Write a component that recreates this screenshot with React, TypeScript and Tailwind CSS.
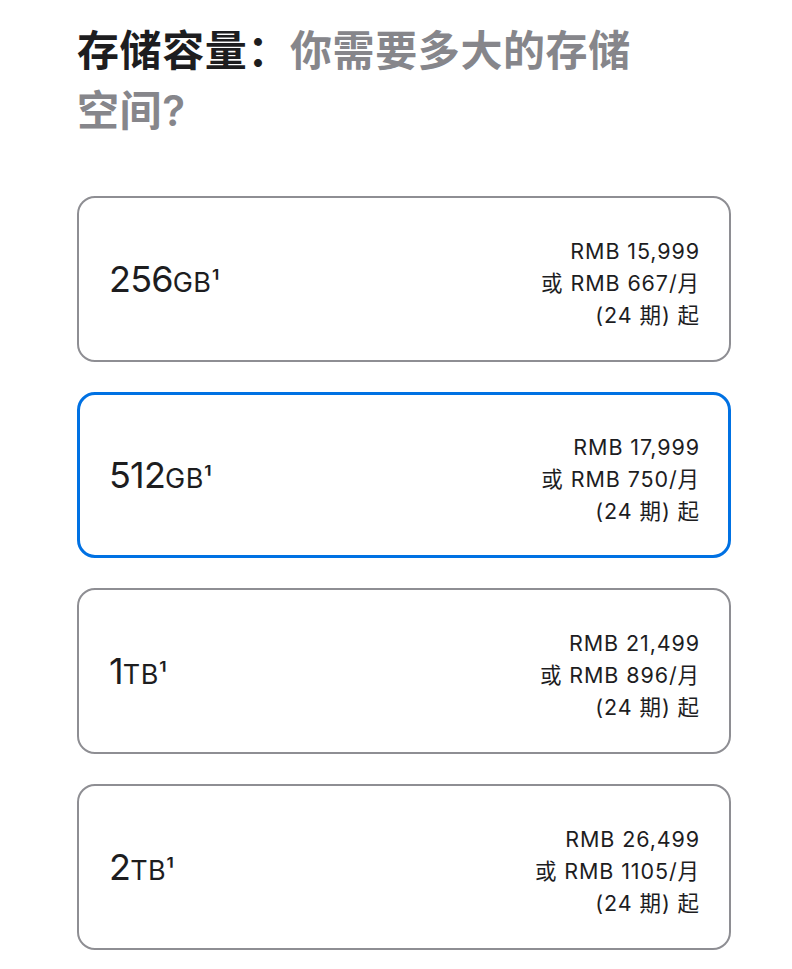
import React from 'react'

const options = [
  { size: '256', unit: 'GB', price: '15,999', monthly: '667', selected: false },
  { size: '512', unit: 'GB', price: '17,999', monthly: '750', selected: true },
  { size: '1', unit: 'TB', price: '21,499', monthly: '896', selected: false },
  { size: '2', unit: 'TB', price: '26,499', monthly: '1105', selected: false },
]

const font = { fontFamily: 'Inter, "Noto Sans CJK SC", sans-serif' }

export default function App() {
  return (
    <div className="min-h-screen bg-white text-[#1d1d1f] px-[77px] pt-[21px]" style={font}>
      <h2 className="text-[42px] leading-[60px] font-semibold tracking-[0.6px] max-w-[590px]">
        存储容量：<span className="text-[#86868b]">你需要多大的存储空间?</span>
      </h2>

      <div className="mt-[55px] flex flex-col gap-[30px] w-[654px]">
        {options.map(o => (
          <button
            key={o.size + o.unit}
            className={
              'h-[166px] rounded-[18px] bg-white flex items-center justify-between text-left ' +
              (o.selected ? 'border-[3px] border-[#0071e3] pl-[29px] pr-[28px]' : 'border-2 border-[#8e8e93] pl-[30px] pr-[29px]')
            }
          >
            <span className="flex items-baseline">
              <span className="text-[36px] leading-none tracking-[-0.8px]">{o.size}</span>
              <span className="text-[27px] leading-none tracking-[0.4px]">{o.unit}¹</span>
            </span>
            <span className="text-right text-[21.5px] leading-[32px] tracking-[0.9px] pt-[7px]">
              <span className="block">RMB {o.price}</span>
              <span className="block">或 RMB {o.monthly}/月</span>
              <span className="block">(24 期) 起</span>
            </span>
          </button>
        ))}
      </div>
    </div>
  )
}
